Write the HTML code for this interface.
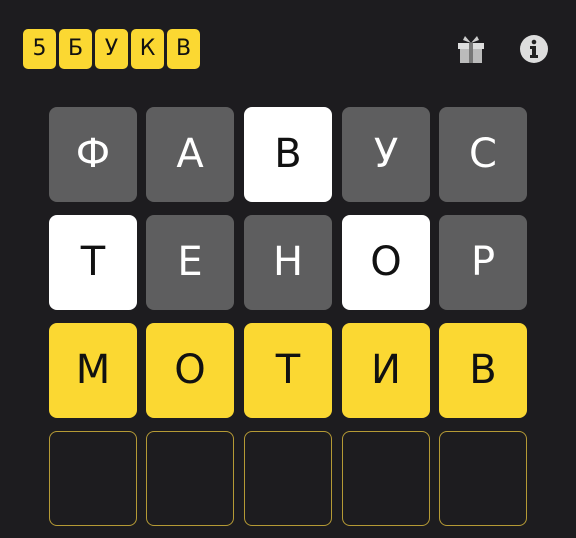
<!DOCTYPE html><html><head><meta charset="utf-8"><style>
body{margin:0;width:576px;height:538px;background:#1d1c1f;font-family:"DejaVu Sans","Liberation Sans",sans-serif;position:relative;overflow:hidden}
.h{position:absolute;top:29px;width:33px;height:40px;background:#fbd832;border-radius:5px;color:#111;font-size:22px;line-height:40px;text-align:center}
.t{position:absolute;width:88px;height:95px;border-radius:8px;font-size:40px;line-height:95px;text-align:center;box-sizing:border-box}
.g{background:#5e5e5f;color:#fff}.w{background:#fff;color:#111}.y{background:#fbd832;color:#111}.e{border:1.5px solid #b59a35}
</style></head><body>
<div class="h" style="left:23px">5</div><div class="h" style="left:59px">Б</div><div class="h" style="left:95px">У</div><div class="h" style="left:131px">К</div><div class="h" style="left:167px">В</div>
<svg style="position:absolute;left:455px;top:33px" width="32" height="32" viewBox="0 0 32 32"><rect x="3" y="10" width="26" height="6" fill="#ddd"/><rect x="5" y="16" width="22" height="14" fill="#bbb"/><rect x="14" y="10" width="4" height="20" fill="#777"/><path d="M16 10 L10 3 L8 7 Z M16 10 L22 3 L24 7 Z" fill="#ccc"/></svg>
<svg style="position:absolute;left:519px;top:34px" width="30" height="30" viewBox="0 0 30 30"><circle cx="15" cy="15" r="14" fill="#ddd"/><circle cx="15" cy="8" r="2.3" fill="#222"/><path d="M11 12h6v9h2v3h-8v-3h2v-6h-2z" fill="#222"/></svg>
<div class="t g" style="left:49px;top:107px">Ф</div><div class="t g" style="left:146px;top:107px">А</div><div class="t w" style="left:244px;top:107px">В</div><div class="t g" style="left:342px;top:107px">У</div><div class="t g" style="left:439px;top:107px">С</div>
<div class="t w" style="left:49px;top:215px">Т</div><div class="t g" style="left:146px;top:215px">Е</div><div class="t g" style="left:244px;top:215px">Н</div><div class="t w" style="left:342px;top:215px">О</div><div class="t g" style="left:439px;top:215px">Р</div>
<div class="t y" style="left:49px;top:323px">М</div><div class="t y" style="left:146px;top:323px">О</div><div class="t y" style="left:244px;top:323px">Т</div><div class="t y" style="left:342px;top:323px">И</div><div class="t y" style="left:439px;top:323px">В</div>
<div class="t e" style="left:49px;top:431px"></div><div class="t e" style="left:146px;top:431px"></div><div class="t e" style="left:244px;top:431px"></div><div class="t e" style="left:342px;top:431px"></div><div class="t e" style="left:439px;top:431px"></div>
</body></html>
